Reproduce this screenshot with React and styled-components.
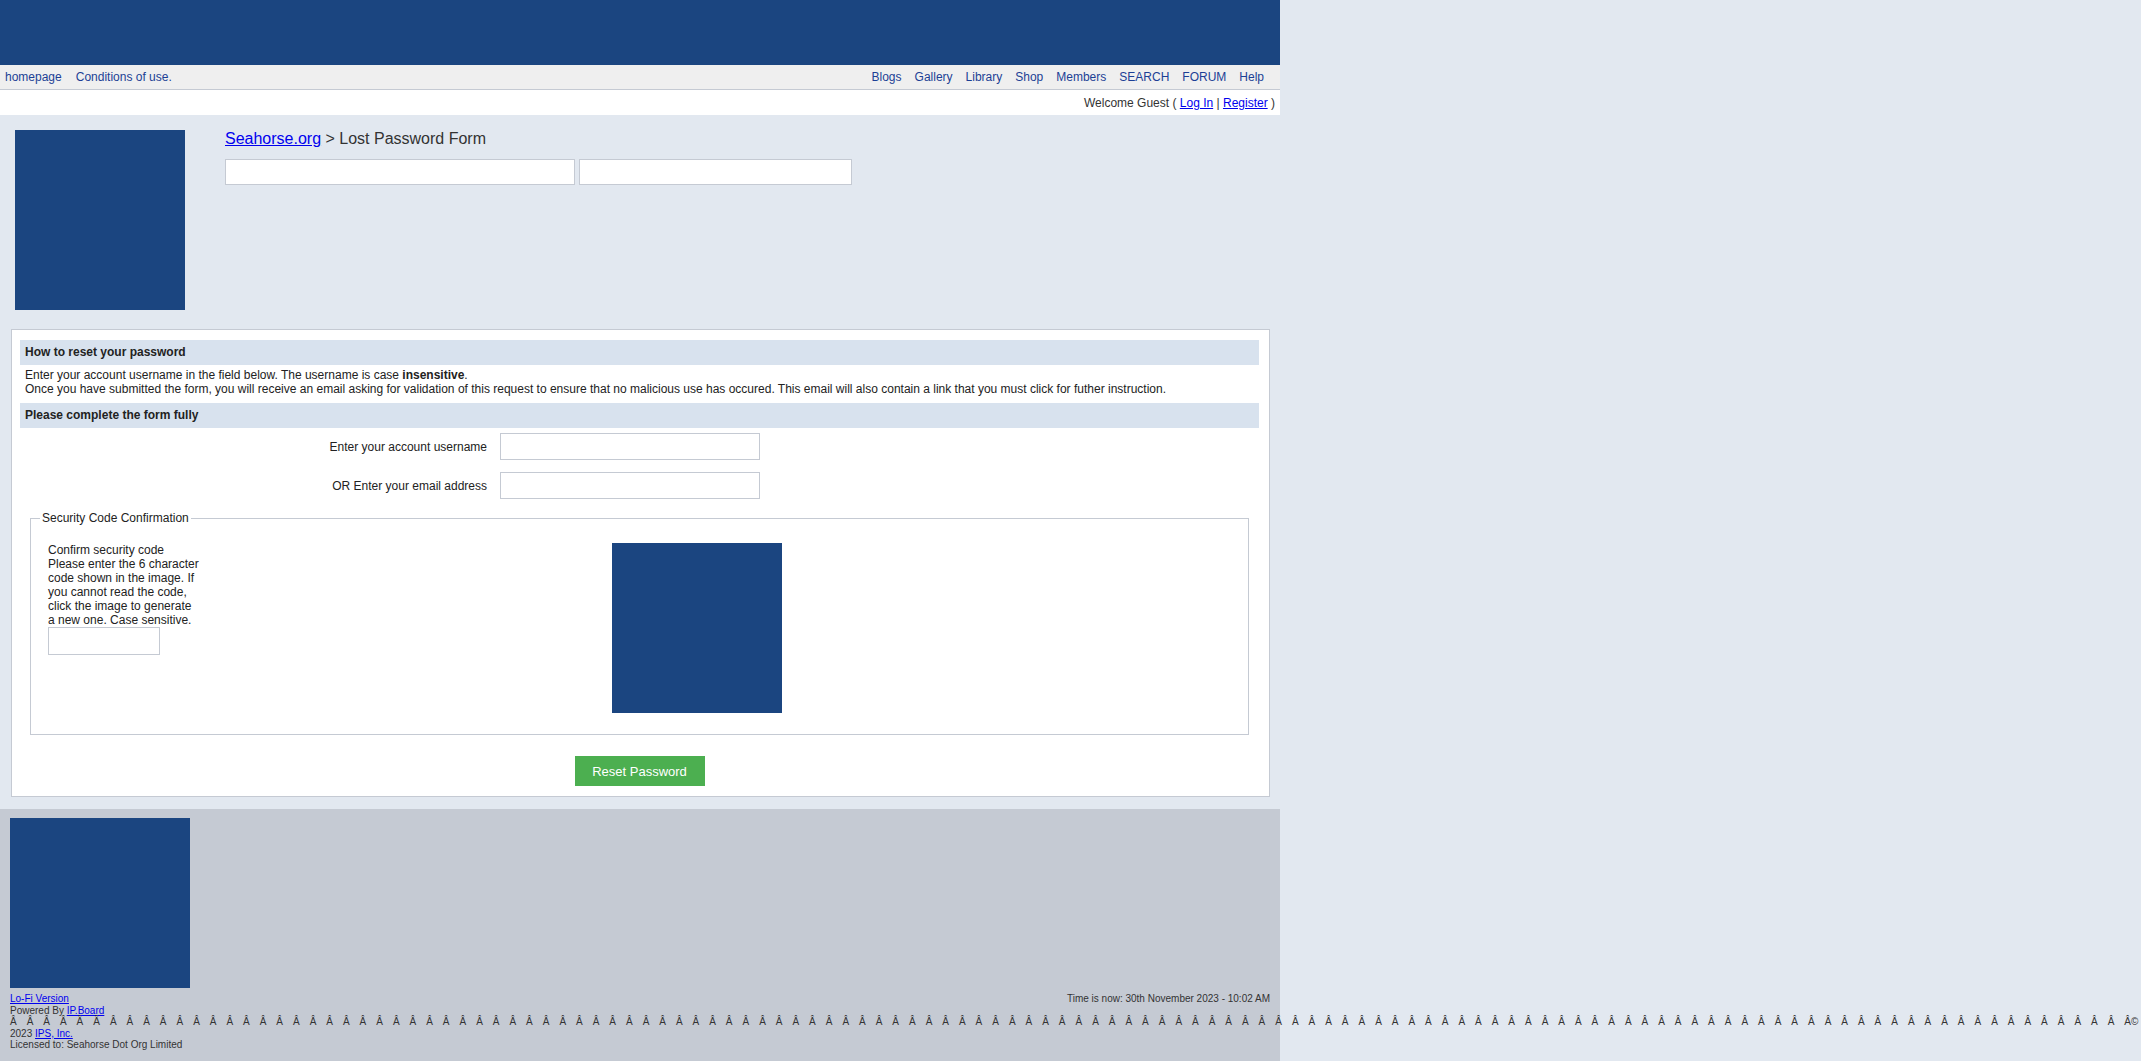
import styled, { createGlobalStyle } from "styled-components";

const GlobalStyle = createGlobalStyle`
  html, body {
    margin: 0;
    padding: 0;
    background: #e2e8f0;
  }
  body {
    font-family: "Liberation Sans", Arial, Helvetica, sans-serif;
    font-size: 12px;
    color: #222;
    overflow-x: hidden;
  }
  a {
    color: #0000ee;
  }
`;

const Page = styled.div`
  width: 1280px;
`;

const Banner = styled.header`
  height: 65px;
  background: #1b4580;
`;

const SubNav = styled.nav`
  display: flex;
  justify-content: space-between;
  align-items: center;
  height: 24px;
  padding: 0 16px 0 5px;
  background: #efefef;
  border-bottom: 1px solid #c5cad3;
`;

const NavGroup = styled.div`
  display: flex;
  gap: ${(p) => p.$gap}px;
`;

const NavLink = styled.a`
  color: #1c3f95;
  text-decoration: none;
`;

const UserBar = styled.div`
  display: flex;
  align-items: center;
  justify-content: flex-end;
  height: 25px;
  padding-right: 5px;
  background: #fff;
  color: #333;
`;

const Top = styled.div`
  display: flex;
  gap: 40px;
  padding: 15px 15px 19px;
`;

const AdBlock = styled.div`
  flex-shrink: 0;
  width: ${(p) => p.$w}px;
  height: ${(p) => p.$h}px;
  background: #1b4580;
`;

const Crumbs = styled.div`
  font-size: 16px;
  color: #333;
`;

const SearchRow = styled.div`
  display: flex;
  gap: 4px;
  margin-top: 11px;
`;

const Field = styled.input`
  box-sizing: border-box;
  width: ${(p) => p.$w}px;
  height: ${(p) => p.$h || 27}px;
  margin: 0;
  border: 1px solid #c5cad3;
  background: #fff;
`;

const FormBox = styled.form`
  margin: 0 10px 0 11px;
  padding: 10px 10px 10px 8px;
  background: #fff;
  border: 1px solid #c5cad3;
`;

const SectionHead = styled.div`
  height: 25px;
  line-height: 25px;
  padding: 0 5px;
  background: #d8e2ee;
  font-weight: bold;
  color: #222;
`;

const Intro = styled.p`
  margin: 0;
  padding: 3px 5px 7px;
  line-height: 14px;
`;

const FieldRow = styled.div`
  display: grid;
  grid-template-columns: 480px 1fr;
  align-items: center;
  padding: 5px 0 7px;
`;

const FieldLabel = styled.label`
  text-align: right;
  padding-right: 13px;
`;

const CodeSet = styled.fieldset`
  margin: 5px 10px 0;
  padding: 18px 16px 21px 17px;
  border: 1px solid #c5cad3;
`;

const CodeLegend = styled.legend`
  margin-left: -8px;
  padding: 0 2px;
  line-height: 14px;
`;

const CodeGrid = styled.div`
  display: grid;
  grid-template-columns: 564px 170px;
  align-items: start;
`;

const CodeHint = styled.div`
  width: 152px;
  line-height: 14px;
`;

const ButtonRow = styled.div`
  display: flex;
  justify-content: center;
  padding-top: 21px;
`;

const SubmitButton = styled.button`
  width: 130px;
  height: 30px;
  border: none;
  background: #4caf50;
  color: #fff;
  font-family: inherit;
  font-size: 13px;
`;

const Footer = styled.footer`
  margin-top: 12px;
  padding: 9px 10px 10px;
  background: #c5cad3;
  color: #333;
  font-size: 10px;
  line-height: 11.5px;
`;

const FooterInfo = styled.div`
  display: flex;
  justify-content: space-between;
  margin-top: 5px;
`;

const FooterLines = styled.div`
  flex: 1;
  min-width: 0;
`;

const FooterTime = styled.div`
  flex-shrink: 0;
  white-space: nowrap;
`;

const NoWrap = styled.div`
  white-space: nowrap;
`;

const Spaced = styled.span`
  letter-spacing: 3.6px;
`;

const leftNav = ["homepage", "Conditions of use."];
const rightNav = ["Blogs", "Gallery", "Library", "Shop", "Members", "SEARCH", "FORUM", "Help"];
const garble = "Â\u00a0".repeat(127);

export default function App() {
  return (
    <Page>
      <GlobalStyle />
      <Banner />
      <SubNav>
        <NavGroup $gap={14}>
          {leftNav.map((item) => (
            <NavLink key={item} href="#">{item}</NavLink>
          ))}
        </NavGroup>
        <NavGroup $gap={13}>
          {rightNav.map((item) => (
            <NavLink key={item} href="#">{item}</NavLink>
          ))}
        </NavGroup>
      </SubNav>
      <UserBar>
        Welcome Guest (&nbsp;<a href="#">Log In</a>&nbsp;|&nbsp;<a href="#">Register</a>&nbsp;)
      </UserBar>

      <Top>
        <AdBlock $w={170} $h={180} />
        <div>
          <Crumbs>
            <a href="#">Seahorse.org</a> &gt; Lost Password Form
          </Crumbs>
          <SearchRow>
            <Field $w={350} $h={26} />
            <Field $w={273} $h={26} />
          </SearchRow>
        </div>
      </Top>

      <FormBox onSubmit={(e) => e.preventDefault()}>
        <SectionHead>How to reset your password</SectionHead>
        <Intro>
          Enter your account username in the field below. The username is case <b>insensitive</b>.
          <br />
          Once you have submitted the form, you will receive an email asking for validation of this request to ensure that no malicious use has occured. This email will also contain a link that you must click for futher instruction.
        </Intro>
        <SectionHead>Please complete the form fully</SectionHead>
        <FieldRow>
          <FieldLabel>Enter your account username</FieldLabel>
          <Field $w={260} />
        </FieldRow>
        <FieldRow>
          <FieldLabel>OR Enter your email address</FieldLabel>
          <Field $w={260} />
        </FieldRow>

        <CodeSet>
          <CodeLegend>Security Code Confirmation</CodeLegend>
          <CodeGrid>
            <CodeHint>
              <div>Confirm security code</div>
              <div>
                Please enter the 6 character code shown in the image. If you cannot read the code, click the image to generate a new one. Case sensitive.
              </div>
              <Field $w={112} $h={28} />
            </CodeHint>
            <AdBlock $w={170} $h={170} />
          </CodeGrid>
        </CodeSet>

        <ButtonRow>
          <SubmitButton type="submit">Reset Password</SubmitButton>
        </ButtonRow>
      </FormBox>

      <Footer>
        <AdBlock $w={180} $h={170} />
        <FooterInfo>
          <FooterLines>
            <div><a href="#">Lo-Fi Version</a></div>
            <div>Powered By <a href="#">IP.Board</a></div>
            <NoWrap><Spaced>{garble}</Spaced>Â©</NoWrap>
            <div>2023 <a href="#">IPS, Inc.</a></div>
            <div>Licensed to: Seahorse Dot Org Limited</div>
          </FooterLines>
          <FooterTime>Time is now: 30th November 2023 - 10:02 AM</FooterTime>
        </FooterInfo>
      </Footer>
    </Page>
  );
}
